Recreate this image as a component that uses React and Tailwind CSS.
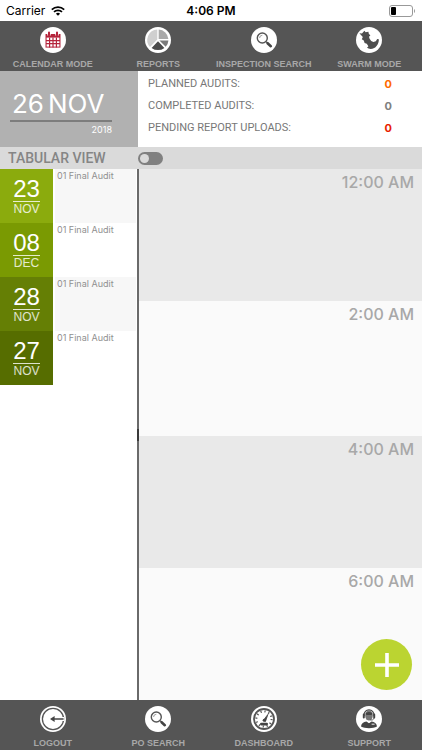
import { useState } from 'react';

const Disc = ({ children }) => (
  <svg viewBox="0 0 26 26" className="size-[26px]" aria-hidden="true">
    <circle cx="13" cy="13" r="13" fill="#fff" />
    {children}
  </svg>
);

const CalendarIcon = () => (
  <Disc>
    <path d="M5.5 7h15v13.6h-15Z" fill="#b5243c" />
    <path d="M6.6 10.6h12.8v9H6.6Z" fill="#fff" />
    <path
      d="M6 13.6h14M6 16.6h14M9.6 10.4v10M13 10.4v10M16.4 10.4v10"
      stroke="#b5243c"
      strokeWidth="1.2"
    />
    <path d="M9 4.6v4M17 4.6v4" stroke="#fff" strokeWidth="3.4" />
    <path d="M9 5.6v2.6M17 5.6v2.6" stroke="#b5243c" strokeWidth="2" strokeLinecap="round" />
  </Disc>
);

const ReportsIcon = () => (
  <Disc>
    <path d="M12.3 12.5V2.6A10.4 10.4 0 0 0 5 20Z" fill="#cfcfcf" />
    <path d="M13.7 12V2.6A10.4 10.4 0 0 1 23.4 12Z" fill="#a9a9a9" />
    <path d="M14.4 13.4h9a10.4 10.4 0 0 1-2.7 6.4Z" fill="#7a7a7a" />
    <path d="M13 14.3l6.4 6.6a10.4 10.4 0 0 1-12.8 0Z" fill="#4a4a4a" />
  </Disc>
);

const SearchIcon = () => (
  <Disc>
    <circle cx="11.3" cy="11" r="5" fill="#fff" stroke="#555" strokeWidth="1.4" />
    <path d="M8.6 11a2.7 2.7 0 0 1 2.7-2.7" fill="none" stroke="#888" strokeWidth="0.8" />
    <path d="M15 14.6l1.6 1.5" stroke="#555" strokeWidth="1.2" />
    <path d="M16.6 16.2l3.2 3" stroke="#444" strokeWidth="2.6" strokeLinecap="round" />
  </Disc>
);

const SwarmIcon = () => (
  <Disc>
    <path
      d="M3.4 6.2L6 6.6l2.4-2.8 1.2 1.4 2.8-.4.4 2 1.6 1.8-1.4 1.2.6 2 1.6 2.2 2.2 1 2.4-.8 1.4-2.2 1.6.2c.2 4-1.8 7.2-4.6 8.8-2.6 1.4-5.4 1.2-7.2-.2l1.4-1.6-1.6-2.4-2.2-.8-.8-2.6-2-1.2 1-2.2Z"
      fill="#4d4d4d"
    />
  </Disc>
);

const LogoutIcon = () => (
  <Disc>
    <circle cx="13" cy="13" r="10.6" fill="none" stroke="#555" strokeWidth="1.3" />
    <path d="M22.4 11v4" stroke="#fff" strokeWidth="3.4" />
    <path d="M23.6 13H12" stroke="#444" strokeWidth="1.5" />
    <path d="M10 13l4.6-3v6Z" fill="#444" />
  </Disc>
);

const DashboardIcon = () => (
  <Disc>
    <circle cx="13" cy="13" r="10" fill="none" stroke="#555" strokeWidth="1.8" />
    <circle
      cx="13"
      cy="13"
      r="7.6"
      fill="none"
      stroke="#555"
      strokeWidth="2"
      strokeDasharray="1.2 2.8"
    />
    <path d="M12.3 14.4l4.6-6-2.4 7Z" fill="#444" stroke="#444" strokeWidth="0.8" />
    <circle cx="13.2" cy="14.2" r="1.5" fill="#444" />
    <rect x="9" y="16.8" width="8" height="2.6" rx="1.3" fill="#444" />
  </Disc>
);

const SupportIcon = () => (
  <Disc>
    <path d="M5 20.6c.2-3 2.6-4.4 5.4-5l2.6 1.6 2.6-1.6c2.8.6 5.2 2 5.4 5-4 2.2-12 2.2-16 0Z" fill="#444" />
    <ellipse cx="13" cy="9.6" rx="3.8" ry="5" fill="#777" />
    <path d="M9.4 8c.6-2.8 6.6-2.8 7.2 0l-1.2 1h-4.8Z" fill="#444" />
    <path d="M7.9 10C7.6 1.8 18.4 1.8 18.1 10" fill="none" stroke="#444" strokeWidth="1.2" />
    <path d="M7.8 8.6v3M18.2 8.6v3" stroke="#444" strokeWidth="2" strokeLinecap="round" />
    <path d="M18 12c-.4 2-2 2.2-4 2.2" fill="none" stroke="#444" strokeWidth="0.8" />
    <path d="M11 14.2l2 2.2 2-2.2" fill="none" stroke="#fff" strokeWidth="0.6" />
    <path d="M15.6 18.2h3" stroke="#fff" strokeWidth="0.9" />
  </Disc>
);

const topItems = [
  { label: 'CALENDAR MODE', Icon: CalendarIcon },
  { label: 'REPORTS', Icon: ReportsIcon },
  { label: 'INSPECTION SEARCH', Icon: SearchIcon },
  { label: 'SWARM MODE', Icon: SwarmIcon },
];

const bottomItems = [
  { label: 'LOGOUT', Icon: LogoutIcon },
  { label: 'PO SEARCH', Icon: SearchIcon },
  { label: 'DASHBOARD', Icon: DashboardIcon },
  { label: 'SUPPORT', Icon: SupportIcon },
];

const totals = [
  { label: 'PLANNED AUDITS:', value: 0, color: 'text-[#ff6a00]' },
  { label: 'COMPLETED AUDITS:', value: 0, color: 'text-[#808080]' },
  { label: 'PENDING REPORT UPLOADS:', value: 0, color: 'text-[#e81e00]' },
];

const audits = [
  { day: '23', month: 'NOV', title: '01 Final Audit', color: 'bg-[#8bab0d]' },
  { day: '08', month: 'DEC', title: '01 Final Audit', color: 'bg-[#7a9a02]' },
  { day: '28', month: 'NOV', title: '01 Final Audit', color: 'bg-[#657f05]' },
  { day: '27', month: 'NOV', title: '01 Final Audit', color: 'bg-[#566d00]' },
];

const hours = ['12:00 AM', '2:00 AM', '4:00 AM', '6:00 AM'];

const NavBar = ({ items, label }) => (
  <nav aria-label={label} className="grid grid-cols-4 bg-[#555555] pt-1.5">
    {items.map(({ label: text, Icon }) => (
      <button key={text} className="flex flex-col items-center gap-1">
        <Icon />
        <span className="font-['Liberation_Sans',sans-serif] text-[9px] leading-[14px] font-bold whitespace-nowrap text-[#a8a8a8]">
          {text}
        </span>
      </button>
    ))}
  </nav>
);

const StatusBar = () => (
  <div className="grid h-[21px] grid-cols-3 items-center px-1.5 text-[12px] text-black">
    <div className="flex items-center gap-1.5">
      <span>Carrier</span>
      <svg viewBox="0 0 14 10" className="h-2.5 w-3.5" aria-hidden="true">
        <path d="M.8 3.6a9 9 0 0 1 12.4 0M3 5.9a5.8 5.8 0 0 1 8 0" fill="none" stroke="#000" strokeWidth="1.7" />
        <path d="M7 9.8L4.9 7.7a3 3 0 0 1 4.2 0Z" />
      </svg>
    </div>
    <span className="text-center font-semibold">4:06 PM</span>
    <svg viewBox="0 0 27 12" className="h-3 w-[27px] justify-self-end" aria-hidden="true">
      <rect x="0.5" y="0.5" width="23" height="11" rx="2.5" fill="none" stroke="#999" />
      <rect x="2" y="2" width="5" height="8" rx="1" />
      <path d="M25 4v4c1.4-.6 1.4-3.4 0-4Z" fill="#999" />
    </svg>
  </div>
);

const App = () => {
  const [tabular, setTabular] = useState(false);

  return (
    <div className="flex min-h-screen flex-col bg-white font-['Inter',sans-serif]">
      <StatusBar />
      <NavBar items={topItems} label="Modes" />

      <section className="flex h-[76px]">
        <div className="flex w-[138px] flex-col bg-[#b1b1b1] px-2.5 pt-[17px] text-white">
          <div className="flex h-[34px] w-[102px] items-center gap-1 border-b-2 border-[#7d7d7d] pl-0.5 text-[26px] leading-8">
            <span>26</span>
            <span>NOV</span>
          </div>
          <span className="w-[102px] text-right text-[9px] leading-4">2018</span>
        </div>
        <dl className="flex flex-1 flex-col pt-0.5 pr-[30px] pl-2.5 text-[11px] leading-[22px] text-[#777777]">
          {totals.map(({ label, value, color }) => (
            <div key={label} className="flex justify-between">
              <dt className="font-['Roboto',sans-serif]">{label}</dt>
              <dd className={`font-bold ${color}`}>{value}</dd>
            </div>
          ))}
        </dl>
      </section>

      <div className="flex h-[22px] items-center bg-[#dadada]">
        <label
          htmlFor="tabular"
          className="w-[138px] pl-2 font-['Roboto',sans-serif] text-[14px] font-medium text-[#858585]"
        >
          TABULAR VIEW
        </label>
        <input
          id="tabular"
          type="checkbox"
          role="switch"
          checked={tabular}
          onChange={(e) => setTabular(e.target.checked)}
          className="flex h-[13px] w-[25px] appearance-none items-center rounded-full bg-[#808080] px-0.5 before:size-[9px] before:rounded-full before:bg-[#dadada] checked:justify-end"
        />
      </div>

      <main className="relative flex flex-1">
        <ul className="w-[137px]">
          {audits.map(({ day, month, title, color }) => (
            <li key={day} className="group flex h-[54px]">
              <div
                className={`flex w-[53px] flex-col items-center pt-[7px] font-['Liberation_Sans',sans-serif] text-white ${color}`}
              >
                <span className="border-b border-white/80 text-[24px] leading-[25px]">{day}</span>
                <span className="text-[12px] leading-[14px] text-white/80">{month}</span>
              </div>
              <p className="mr-px ml-0.5 flex-1 pt-px pl-0.5 text-[9px] leading-3 text-[#909090] group-odd:bg-[#f7f7f7]">
                {title}
              </p>
            </li>
          ))}
        </ul>
        <ol className="grid flex-1 grid-rows-[132fr_135fr_132fr_132fr] border-l-2 border-[#6a6a6a]">
          {hours.map((hour) => (
            <li
              key={hour}
              className="bg-[#fafafa] pr-2 text-right text-[16px] leading-[26px] font-medium text-[#a8a8a8] odd:bg-[#e9e9e9]"
            >
              {hour}
            </li>
          ))}
        </ol>
        {/* scroll handle on the divider */}
        <span className="absolute top-[49%] left-[137px] h-3 w-0.5 bg-[#3a3a3a]" />
        <button
          aria-label="Add audit"
          className="absolute right-2.5 bottom-2.5 flex size-[51px] items-center justify-center rounded-full bg-[#bbd431]"
        >
          <svg viewBox="0 0 24 24" className="size-6" aria-hidden="true">
            <path d="M12 0v24M0 12h24" stroke="#fff" strokeWidth="3.6" />
          </svg>
        </button>
      </main>

      <NavBar items={bottomItems} label="Tools" />
    </div>
  );
};

export default App;
